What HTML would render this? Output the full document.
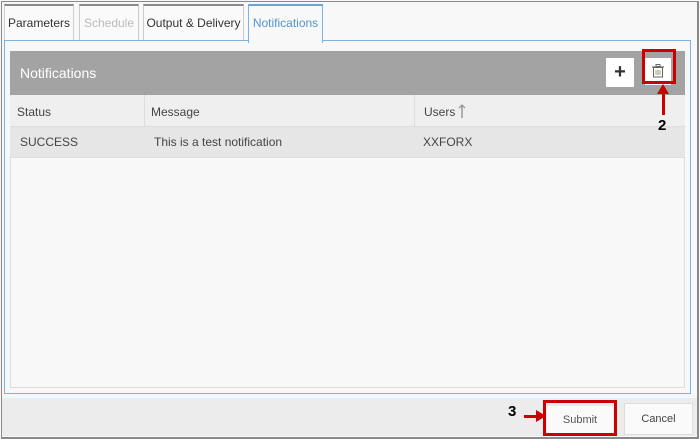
<!DOCTYPE html><html><head><style>
body{margin:0;width:700px;height:438px;background:#f8f8f8;font-family:"Liberation Sans",Arial,sans-serif;font-size:12px;position:relative;overflow:hidden}
.a{position:absolute}
.h span.t{position:absolute;top:1px;line-height:32px;height:31px}
</style></head><body>
<div class="a" style="left:1px;top:1px;width:695px;height:435px;border:1px solid #8a8a8a;border-right-width:2px;border-bottom-width:2px;"></div>
<div class="a" style="left:2px;top:398px;width:695px;height:38px;background:#ececec"></div>
<div class="a" style="left:4px;top:4px;width:68px;height:36px;border:1px solid #ccc;border-top:2px solid #8a8a8a;border-bottom:none;background:#fafafa;color:#333;line-height:34px;text-align:center">Parameters</div>
<div class="a" style="left:79px;top:4px;width:58px;height:36px;border:1px solid #ccc;border-top:2px solid #8a8a8a;border-bottom:none;background:#fafafa;color:#bbb;line-height:34px;text-align:center">Schedule</div>
<div class="a" style="left:143px;top:4px;width:99px;height:36px;border:1px solid #ccc;border-top:2px solid #8a8a8a;border-bottom:none;background:#fafafa;color:#333;line-height:34px;text-align:center">Output &amp; Delivery</div>
<div class="a" style="left:4px;top:40px;width:685px;height:352px;border:1px solid #7fb1e0;background:#f8f8f8"></div>
<div class="a" style="left:248px;top:4px;width:73px;height:37px;border:1px solid #7fb1e0;border-top:2px solid #6aa3da;border-bottom:none;background:#f8f8f8;color:#5593cf;line-height:34px;text-align:center">Notifications</div>
<div class="a" style="left:10px;top:51px;width:673px;height:335px;border:1px solid #ddd;background:#f8f8f8"></div>
<div class="a" style="left:10px;top:51px;width:675px;height:44px;background:#a3a3a3;color:#fff;font-size:14px;line-height:44px;"><span style="margin-left:10px">Notifications</span></div>
<div class="a" style="left:606px;top:58px;width:28px;height:29px;background:#fff;text-align:center;line-height:29px;font-size:20px;font-weight:bold;color:#333">+</div>
<div class="a" style="left:645px;top:58px;width:26px;height:27px;background:#fff"></div>
<svg class="a" style="left:652px;top:64px" width="12" height="14" viewBox="0 0 12 14"><rect x="4" y="0.5" width="4" height="2" fill="none" stroke="#666"/><line x1="0" y1="3" x2="12" y2="3" stroke="#666" stroke-width="1.2"/><rect x="1.5" y="3.5" width="9" height="9.5" fill="none" stroke="#666"/><line x1="4" y1="6" x2="4" y2="11" stroke="#c9a23a"/><line x1="6" y1="6" x2="6" y2="11" stroke="#5a8bd0"/><line x1="8" y1="6" x2="8" y2="11" stroke="#c9a23a"/></svg>
<div class="a" style="left:642px;top:49px;width:28px;height:29px;border:3px solid #c00"></div>
<div class="a h" style="left:10px;top:95px;width:675px;height:31px;background:#efefef;border-bottom:1px solid #ddd;color:#444">
<span class="t" style="left:7px">Status</span>
<span class="a" style="left:134px;top:0;height:31px;border-left:1px solid #ddd"></span>
<span class="t" style="left:141px">Message</span>
<span class="a" style="left:404px;top:0;height:31px;border-left:1px solid #ddd"></span>
<span class="t" style="left:414px">Users</span>
<svg class="a" style="left:448px;top:9px" width="8" height="14" viewBox="0 0 8 14"><line x1="4" y1="1" x2="4" y2="14" stroke="#999" stroke-width="1.5"/><path d="M1 4 L4 1 L7 4" fill="none" stroke="#999" stroke-width="1.3"/></svg>
</div>
<div class="a" style="left:10px;top:127px;width:675px;height:30px;background:#e6e6e6;color:#444;line-height:30px;border-bottom:1px solid #ddd">
<span class="a" style="left:10px">SUCCESS</span><span class="a" style="left:144px">This is a test notification</span><span class="a" style="left:413px">XXFORX</span></div>
<div class="a" style="left:662px;top:87px;width:3px;height:28px;background:#c00"></div>
<div class="a" style="left:657px;top:84px;width:0;height:0;border-left:6px solid transparent;border-right:6px solid transparent;border-bottom:10px solid #c00"></div>
<div class="a" style="left:658px;top:117px;font-weight:bold;font-size:15px">2</div>
<div class="a" style="left:547px;top:406px;width:66px;height:28px;background:#fafafa;color:#555;font-size:11px;line-height:28px;text-align:center">Submit</div>
<div class="a" style="left:543px;top:400px;width:68px;height:30px;border:3px solid #c00"></div>
<div class="a" style="left:624px;top:403px;width:67px;height:30px;border:1px solid #ddd;background:#fafafa;color:#444;font-size:11px;line-height:30px;text-align:center">Cancel</div>
<div class="a" style="left:508px;top:403px;font-weight:bold;font-size:15px">3</div>
<div class="a" style="left:524px;top:415px;width:20px;height:3px;background:#c00"></div>
<div class="a" style="left:536px;top:410px;width:0;height:0;border-top:6px solid transparent;border-bottom:6px solid transparent;border-left:10px solid #c00"></div>
</body></html>
